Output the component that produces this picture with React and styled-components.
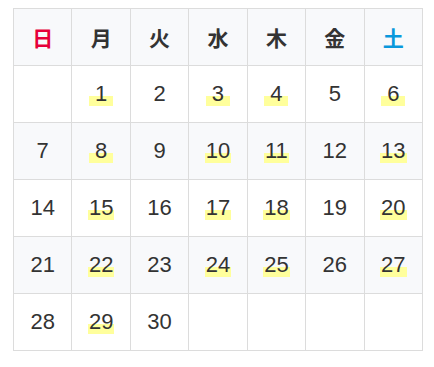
import React from 'react';
import styled, { createGlobalStyle } from 'styled-components';

const GlobalStyle = createGlobalStyle`
  body {
    margin: 0;
    background: #fff;
    font-family: 'Liberation Sans', Arial, 'Noto Sans CJK JP', sans-serif;
    color: #333;
  }
`;

const weekdays = [
  { label: '日', tone: 'sun' },
  { label: '月' },
  { label: '火' },
  { label: '水' },
  { label: '木' },
  { label: '金' },
  { label: '土', tone: 'sat' },
];

// days with a marker
const marked = [1, 3, 4, 6, 8, 10, 11, 13, 15, 17, 18, 20, 22, 24, 25, 27, 29];

const weeks = [
  [null, 1, 2, 3, 4, 5, 6],
  [7, 8, 9, 10, 11, 12, 13],
  [14, 15, 16, 17, 18, 19, 20],
  [21, 22, 23, 24, 25, 26, 27],
  [28, 29, 30, null, null, null, null],
];

const toneColors = { sun: '#e6003a', sat: '#0a98dc' };

const App = () => (
  <>
    <GlobalStyle />
    <Wrapper>
      <Calendar>
        <thead>
          <HeadRow>
            {weekdays.map((d) => (
              <HeadCell key={d.label} tone={d.tone}>
                {d.label}
              </HeadCell>
            ))}
          </HeadRow>
        </thead>
        <tbody>
          {weeks.map((week, i) => (
            <Row key={i} striped={i % 2 === 1}>
              {week.map((day, j) => (
                <Cell key={j}>
                  {day && (marked.includes(day) ? <Marker>{day}</Marker> : <Day>{day}</Day>)}
                </Cell>
              ))}
            </Row>
          ))}
        </tbody>
      </Calendar>
    </Wrapper>
  </>
);

export default App;

const Wrapper = styled.div`
  padding: 8px 12px 0 13px;
`;

const Calendar = styled.table`
  border-collapse: collapse;
  table-layout: fixed;
  width: 410px;
`;

const HeadRow = styled.tr`
  background: #f8f9fb;
  height: 57px;
`;

const HeadCell = styled.th`
  border: 1px solid #dcdcdc;
  padding: 0;
  font-family: 'Noto Sans CJK JP', sans-serif;
  font-size: 21px;
  font-weight: 700;
  color: ${({ tone }) => toneColors[tone] || '#333'};
  text-align: center;
  vertical-align: middle;
`;

const Row = styled.tr`
  height: 57px;
  background: ${({ striped }) => (striped ? '#f8f9fb' : '#fff')};
`;

const Cell = styled.td`
  border: 1px solid #dcdcdc;
  padding: 0;
  text-align: center;
  vertical-align: middle;
  font-size: 22px;
  color: #333;
`;

const Day = styled.span`
  display: inline-block;
  line-height: 25px;
`;

const Marker = styled.span`
  display: inline-block;
  line-height: 25px;
  min-width: 22px;
  padding: 0 1px;
  background: linear-gradient(transparent 60%, #ffff9c 60%);
`;
